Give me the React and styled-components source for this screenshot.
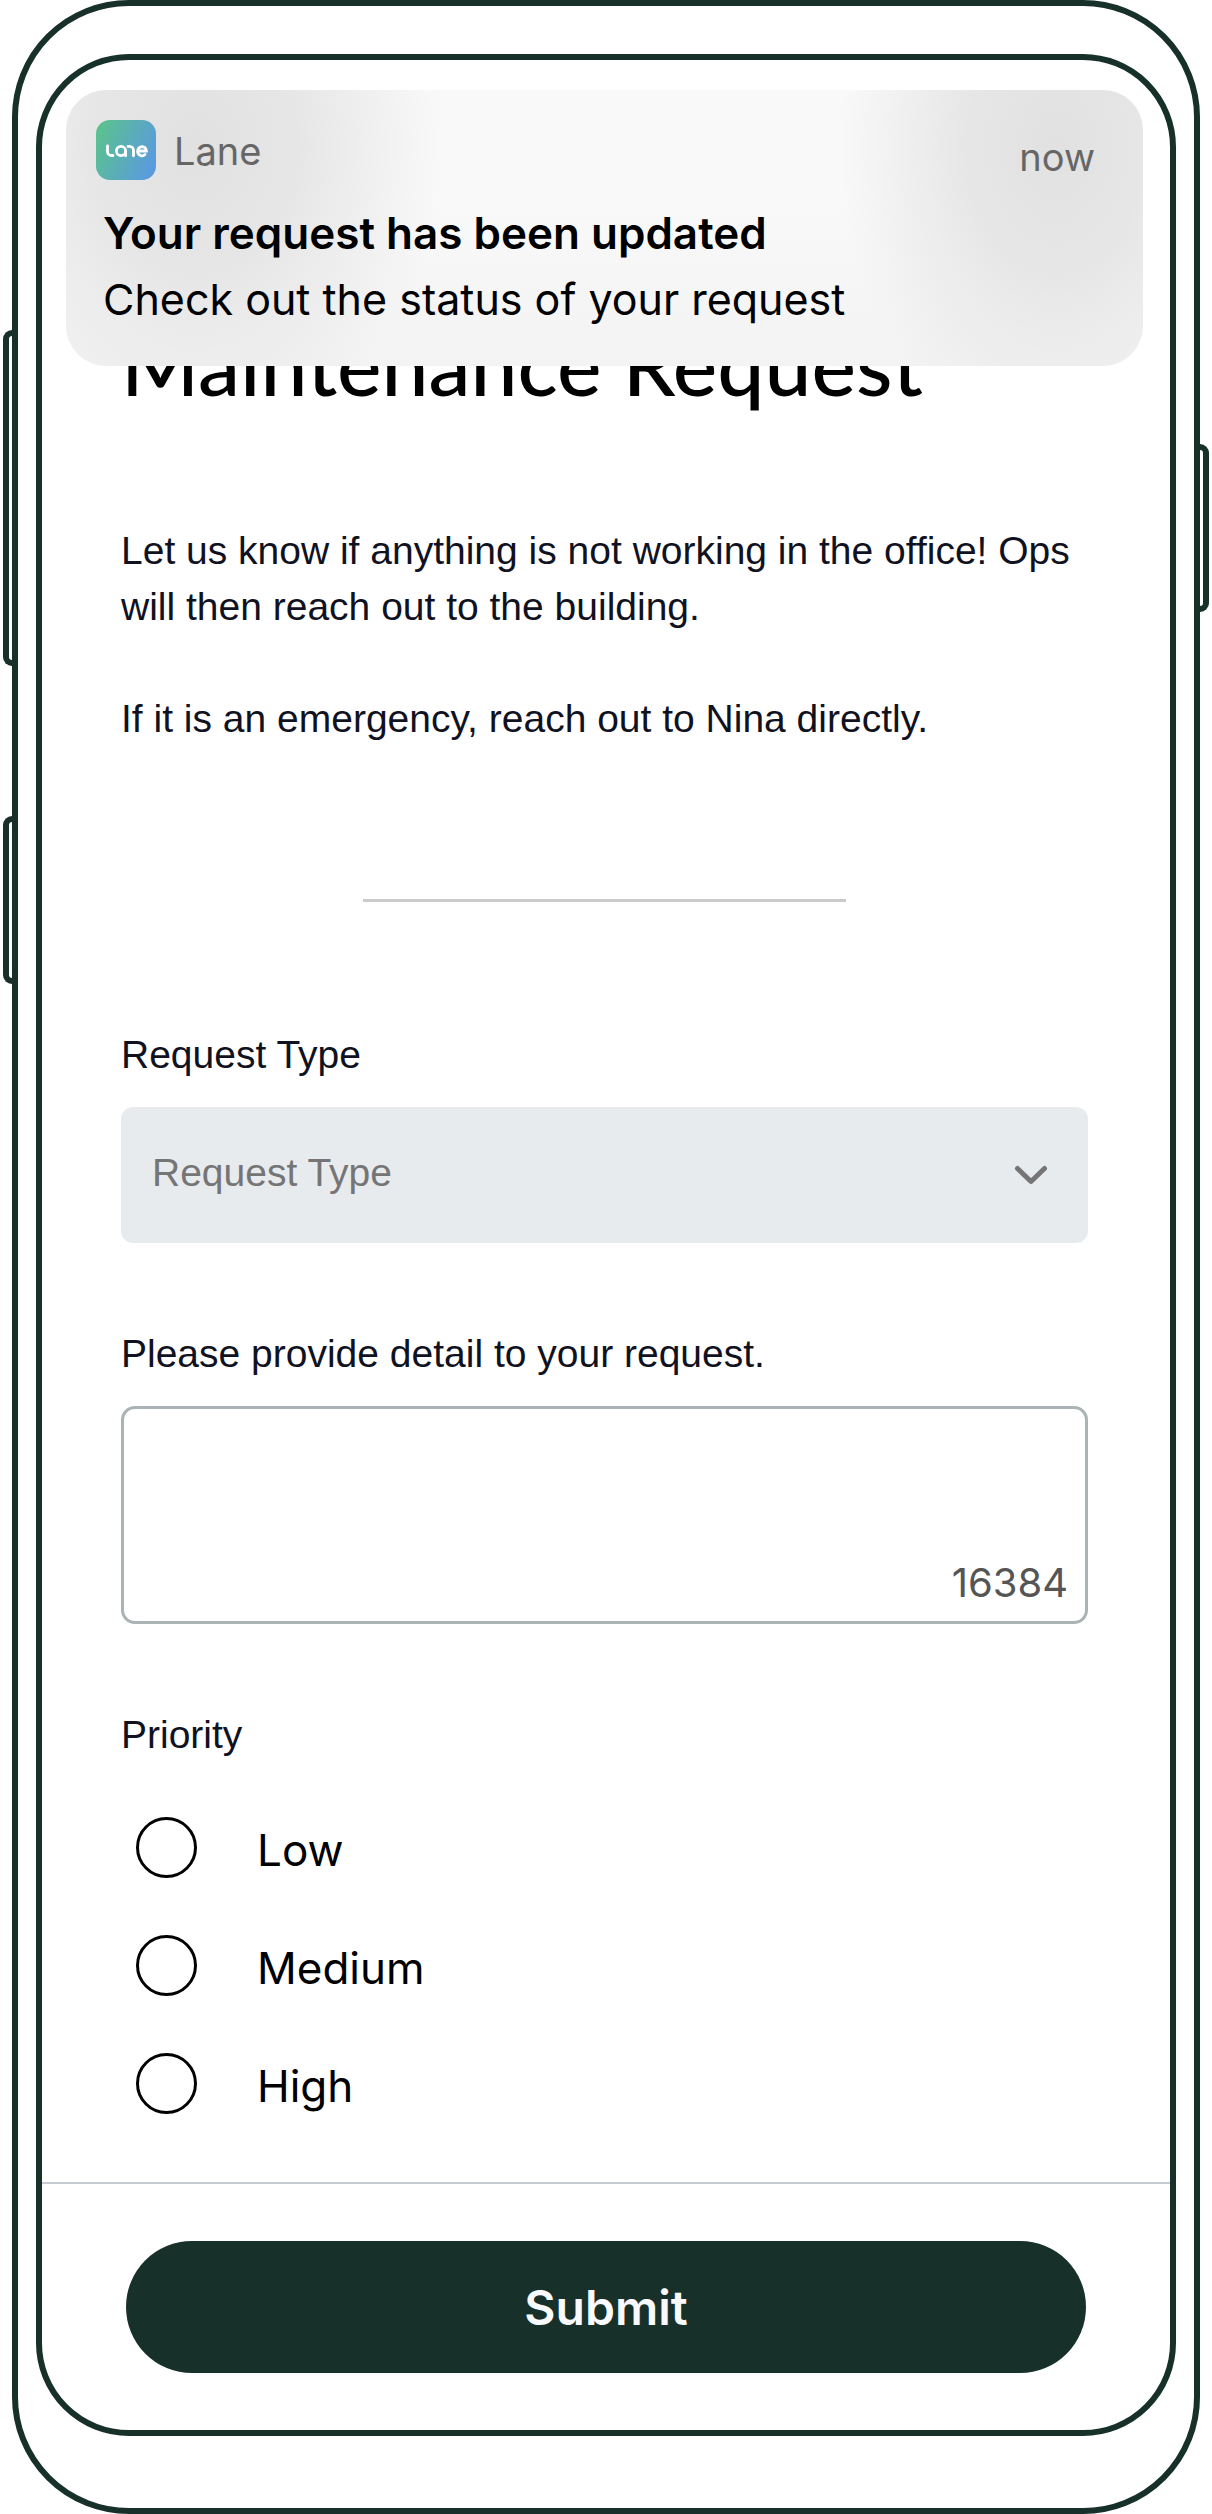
import React, { useState } from 'react';
import styled, { createGlobalStyle } from 'styled-components';

const INK = '#18302a';

const GlobalStyle = createGlobalStyle`
  * {
    box-sizing: border-box;
  }

  body {
    margin: 0;
    background: #fff;
    font-family: 'Liberation Sans', Arial, sans-serif;
    font-size: 39px;
    line-height: 56px;
    color: #11121f;
  }
`;

const Stage = styled.div`
  padding: 0 12px;
`;

const Phone = styled.div`
  position: relative;
  padding: 48px 18px 72px;
  border: 6px solid ${INK};
  border-radius: 117px;
`;

// Hardware button on the edge of the phone
const SideKey = styled.span`
  position: absolute;
  top: ${(p) => p.$top}px;
  ${(p) => p.$side}: -15px;
  width: 15px;
  height: ${(p) => p.$height}px;
  border: 6px solid ${INK};
  border-${(p) => (p.$side === 'left' ? 'right' : 'left')}-width: 0;
  border-radius: ${(p) => (p.$side === 'left' ? '9px 0 0 9px' : '0 9px 9px 0')};
`;

const Screen = styled.main`
  position: relative;
  border: 6px solid ${INK};
  border-radius: 93px;
  overflow: hidden;
`;

const Notification = styled.section`
  position: absolute;
  top: 30px;
  left: 24px;
  right: 27px;
  height: 276px;
  padding: 30px 48px 0 30px;
  border-radius: 40px;
  font-family: Inter, sans-serif;
  color: #000;
  background:
    radial-gradient(ellipse 250px 300px at 12% 20%, #e1e1e1, rgba(228, 228, 228, 0.9) 40%, rgba(242, 242, 242, 0)),
    radial-gradient(ellipse 220px 300px at 92% 20%, #e1e1e1, rgba(228, 228, 228, 0.9) 40%, rgba(242, 242, 242, 0)),
    linear-gradient(#f9f9f9 40%, #f3f3f3);
`;

const NotificationHead = styled.header`
  display: flex;
  align-items: center;
  gap: 18px;
  height: 60px;
  font-size: 38px;
  line-height: 60px;
  color: #666;
`;

const AppIcon = styled.svg`
  width: 60px;
  height: 60px;
`;

const AppName = styled.span`
  padding-top: 2px;
`;

const Time = styled.time`
  margin-left: auto;
  padding-top: 14px;
`;

const NotificationBody = styled.div`
  padding: 20px 7px 0;
`;

const NotificationText = styled.p`
  margin: 0;
  font-size: ${(p) => (p.$strong ? 44 : 43)}px;
  line-height: 66px;
  font-weight: ${(p) => (p.$strong ? 600 : 400)};
`;

const Form = styled.form`
  display: flex;
  flex-direction: column;
`;

const Content = styled.div`
  padding: 264px 82px 40px 79px;
`;

const Title = styled.h1`
  margin: 0 0 119px;
  font-family: Lato, sans-serif;
  font-size: 84px;
  line-height: 80px;
  font-weight: 500;
  color: #000;
`;

const Intro = styled.p`
  margin: 0 0 56px;
`;

const Divider = styled.hr`
  width: 50%;
  height: 3px;
  margin: 152px auto 125px;
  border: 0;
  background: #cbcbcb;
`;

const Field = styled.div`
  display: flex;
  flex-direction: column;
  gap: 24px;
  margin-bottom: 83px;
`;

const SelectWrap = styled.div`
  position: relative;
`;

const Select = styled.select`
  appearance: none;
  display: block;
  width: 100%;
  height: 136px;
  padding: 0 90px 5px 31px;
  border: 0;
  border-radius: 12px;
  background: #e8ebee;
  color: #757575;
  font: inherit;
`;

const Chevron = styled.svg`
  position: absolute;
  right: 38px;
  top: calc(50% - 11px);
  width: 38px;
  height: 22px;
  pointer-events: none;
`;

const DetailBox = styled.div`
  display: flex;
  flex-direction: column;
  height: 218px;
  padding: 12px 17px 10px;
  border: 3px solid #abb3b7;
  border-radius: 14px;
`;

const Detail = styled.textarea`
  flex: 1;
  min-height: 0;
  padding: 0;
  border: 0;
  outline: 0;
  resize: none;
  background: none;
  font: inherit;
`;

const Counter = styled.output`
  align-self: flex-end;
  font-family: Inter, sans-serif;
  font-size: 40px;
  color: #555;
`;

const Priority = styled.fieldset`
  margin: 0;
  padding: 0;
  border: 0;
`;

const Legend = styled.legend`
  padding: 0;
  margin-bottom: 25px;
`;

const Option = styled.label`
  display: flex;
  align-items: center;
  gap: 60px;
  height: 118px;
  padding-left: 15px;
  font-family: Inter, sans-serif;
  font-size: 44px;
  color: #000;
`;

const OptionName = styled.span`
  padding-top: 5px;
`;

const Radio = styled.input`
  appearance: none;
  width: 61px;
  height: 61px;
  margin: 0;
  border: 3px solid #000;
  border-radius: 50%;

  &:checked {
    background: radial-gradient(${INK} 50%, transparent 54%);
  }
`;

const Footer = styled.footer`
  padding: 57px 84px;
  border-top: 2px solid #c5ccd3;
`;

const SubmitButton = styled.button`
  display: block;
  width: 100%;
  height: 132px;
  border: 0;
  border-radius: 66px;
  background: ${INK};
  color: #f8f9fc;
  font-family: Inter, sans-serif;
  font-size: 48px;
  font-weight: 600;
`;

function LaneIcon() {
  return (
    <AppIcon viewBox="0 0 60 60" role="img" aria-label="Lane">
      <defs>
        <linearGradient id="lane" x1="0" y1="0.3" x2="1" y2="0.7">
          <stop offset="0" stopColor="#5bc190" />
          <stop offset="1" stopColor="#5a9ae0" />
        </linearGradient>
      </defs>
      <rect width="60" height="60" rx="14" fill="url(#lane)" />
      <g fill="none" stroke="#fff" strokeWidth="2.8" strokeLinecap="round">
        <path d="M11.500 26v5.500a4 4 0 0 0 4 4h1.500" />
        <circle cx="25" cy="31" r="4.600" />
        <path d="M29.600 31v4.800" />
        <path d="M32 26.400h1.500a4 4 0 0 1 4 4v5.400" />
        <path d="M41.800 31h8.600a4.400 4.600 0 1 0-1.400 3.600" />
      </g>
    </AppIcon>
  );
}

const LEVELS = ['Low', 'Medium', 'High'];
const MAX_LENGTH = 16384;

function App() {
  const [detail, setDetail] = useState('');
  const [priority, setPriority] = useState('');

  return (
    <Stage>
      <GlobalStyle />
      <Phone>
        <SideKey $side="left" $top={324} $height={336} />
        <SideKey $side="left" $top={810} $height={168} />
        <SideKey $side="right" $top={438} $height={168} />
        <Screen>
          <Form onSubmit={(e) => e.preventDefault()}>
            <Content>
              <Title>Maintenance Request</Title>
              <Intro>
                Let us know if anything is not working in the office! Ops will then reach out to
                the building.
              </Intro>
              <Intro>If it is an emergency, reach out to Nina directly.</Intro>
              <Divider />
              <Field>
                <label htmlFor="type">Request Type</label>
                <SelectWrap>
                  <Select id="type" defaultValue="">
                    <option value="">Request Type</option>
                  </Select>
                  <Chevron viewBox="0 0 38 22" aria-hidden="true">
                    <path
                      d="M5.500 4.500L19 17.500L32.500 4.500"
                      fill="none"
                      stroke="#757575"
                      strokeWidth="5"
                      strokeLinecap="round"
                      strokeLinejoin="round"
                    />
                  </Chevron>
                </SelectWrap>
              </Field>
              <Field>
                <label htmlFor="detail">Please provide detail to your request.</label>
                <DetailBox>
                  <Detail
                    id="detail"
                    maxLength={MAX_LENGTH}
                    value={detail}
                    onChange={(e) => setDetail(e.target.value)}
                  />
                  <Counter htmlFor="detail">{MAX_LENGTH - detail.length}</Counter>
                </DetailBox>
              </Field>
              <Priority>
                <Legend>Priority</Legend>
                {LEVELS.map((level) => (
                  <Option key={level}>
                    <Radio
                      type="radio"
                      name="priority"
                      value={level}
                      checked={priority === level}
                      onChange={() => setPriority(level)}
                    />
                    <OptionName>{level}</OptionName>
                  </Option>
                ))}
              </Priority>
            </Content>
            <Footer>
              <SubmitButton type="submit">Submit</SubmitButton>
            </Footer>
          </Form>
          <Notification>
            <NotificationHead>
              <LaneIcon />
              <AppName>Lane</AppName>
              <Time>now</Time>
            </NotificationHead>
            <NotificationBody>
              <NotificationText $strong>Your request has been updated</NotificationText>
              <NotificationText>Check out the status of your request</NotificationText>
            </NotificationBody>
          </Notification>
        </Screen>
      </Phone>
    </Stage>
  );
}

export default App;
